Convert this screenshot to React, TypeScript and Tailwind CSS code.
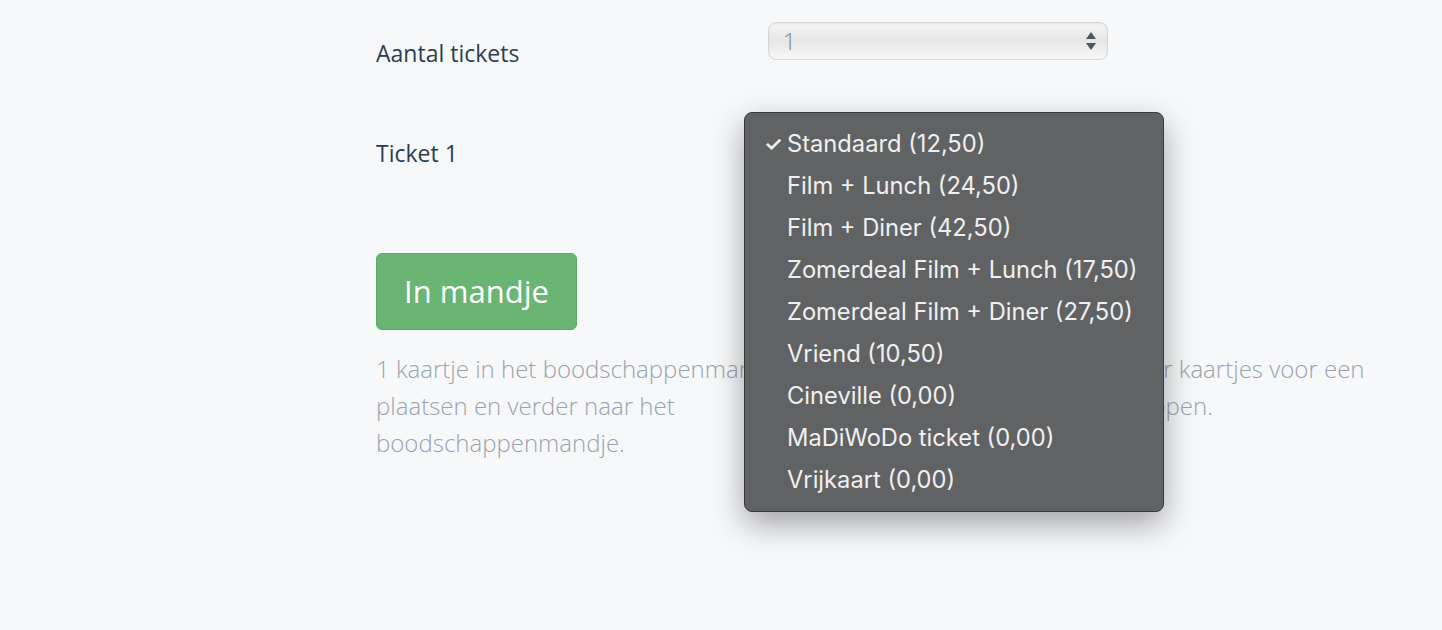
const ticketTypes = [
  "Standaard (12,50)",
  "Film + Lunch (24,50)",
  "Film + Diner (42,50)",
  "Zomerdeal Film + Lunch (17,50)",
  "Zomerdeal Film + Diner (27,50)",
  "Vriend (10,50)",
  "Cineville (0,00)",
  "MaDiWoDo ticket (0,00)",
  "Vrijkaart (0,00)",
];

export default function App() {
  return (
    <div
      className="relative min-h-[630px] bg-[#f7f8fa] text-[#2c3e50]"
      style={{ fontFamily: '"Open Sans", "Noto Sans", sans-serif' }}
    >
      <div className="ml-[376px] w-[990px]">
        {/* aantal tickets */}
        <div className="grid h-[100px] grid-cols-[392px_340px]">
          <label className="pt-[38px] text-[23px] leading-[30px]">Aantal tickets</label>
          <div className="pt-[22px]">
            <FakeSelect value="1" />
          </div>
        </div>

        {/* ticket 1 */}
        <div className="grid h-[100px] grid-cols-[392px_340px]">
          <label className="pt-[38px] text-[23px] leading-[30px]">Ticket 1</label>
          <div className="pt-[22px]">
            <FakeSelect value="Standaard (12,50)" />
          </div>
        </div>

        <div className="pt-[53px]">
          <button className="h-[77px] w-[201px] rounded-[6px] border border-[#5fa868] bg-[#6ab573] text-[31px] text-white">
            In mandje
          </button>
        </div>

        <div className="mt-[20px] grid grid-cols-[420px_1fr] gap-[30px] text-[24px] font-light leading-[37px] text-[#9aa4ab]">
          <p>
            1 kaartje in het boodschappenmandje plaatsen en verder naar het
            boodschappenmandje.
          </p>
          <p>
            Of verder winkelen en nog meer kaartjes voor een andere voorstelling
            of dag te kopen.
          </p>
        </div>
      </div>

      {/* open native dropdown */}
      <div
        className="absolute left-[744px] top-[112px] w-[420px] rounded-[8px] border border-[#3a3a3a] bg-[#616263] py-[10px] text-[23.7px] text-[#f0f0f0] shadow-[0_12px_32px_rgba(0,0,0,0.35)]"
        style={{ fontFamily: 'Inter, "Noto Sans", sans-serif' }}
      >
        {ticketTypes.map((t, i) => (
          <div key={t} className="flex h-[42px] items-center">
            <span className="w-[42px] pl-[19px] text-[21px] font-semibold">{i === 0 ? "✓" : ""}</span>
            <span>{t}</span>
          </div>
        ))}
      </div>
    </div>
  );
}

function FakeSelect({ value }: { value: string }) {
  return (
    <div className="flex h-[38px] w-[340px] items-center justify-between rounded-[8px] border border-[#d4d6d8] bg-gradient-to-b from-[#f6f6f6] via-[#e6e6e6] to-[#f7f7f7] pl-[14px] pr-[10px] shadow-[inset_0_1px_2px_rgba(0,0,0,0.08)]">
      <span className="text-[23px] font-light text-[#8a8a8a]">{value}</span>
      <svg width="12" height="22" viewBox="0 0 12 22">
        <path d="M6 2 L11 9 H1 Z" fill="#4b5762" />
        <path d="M6 20 L11 13 H1 Z" fill="#4b5762" />
      </svg>
    </div>
  );
}
